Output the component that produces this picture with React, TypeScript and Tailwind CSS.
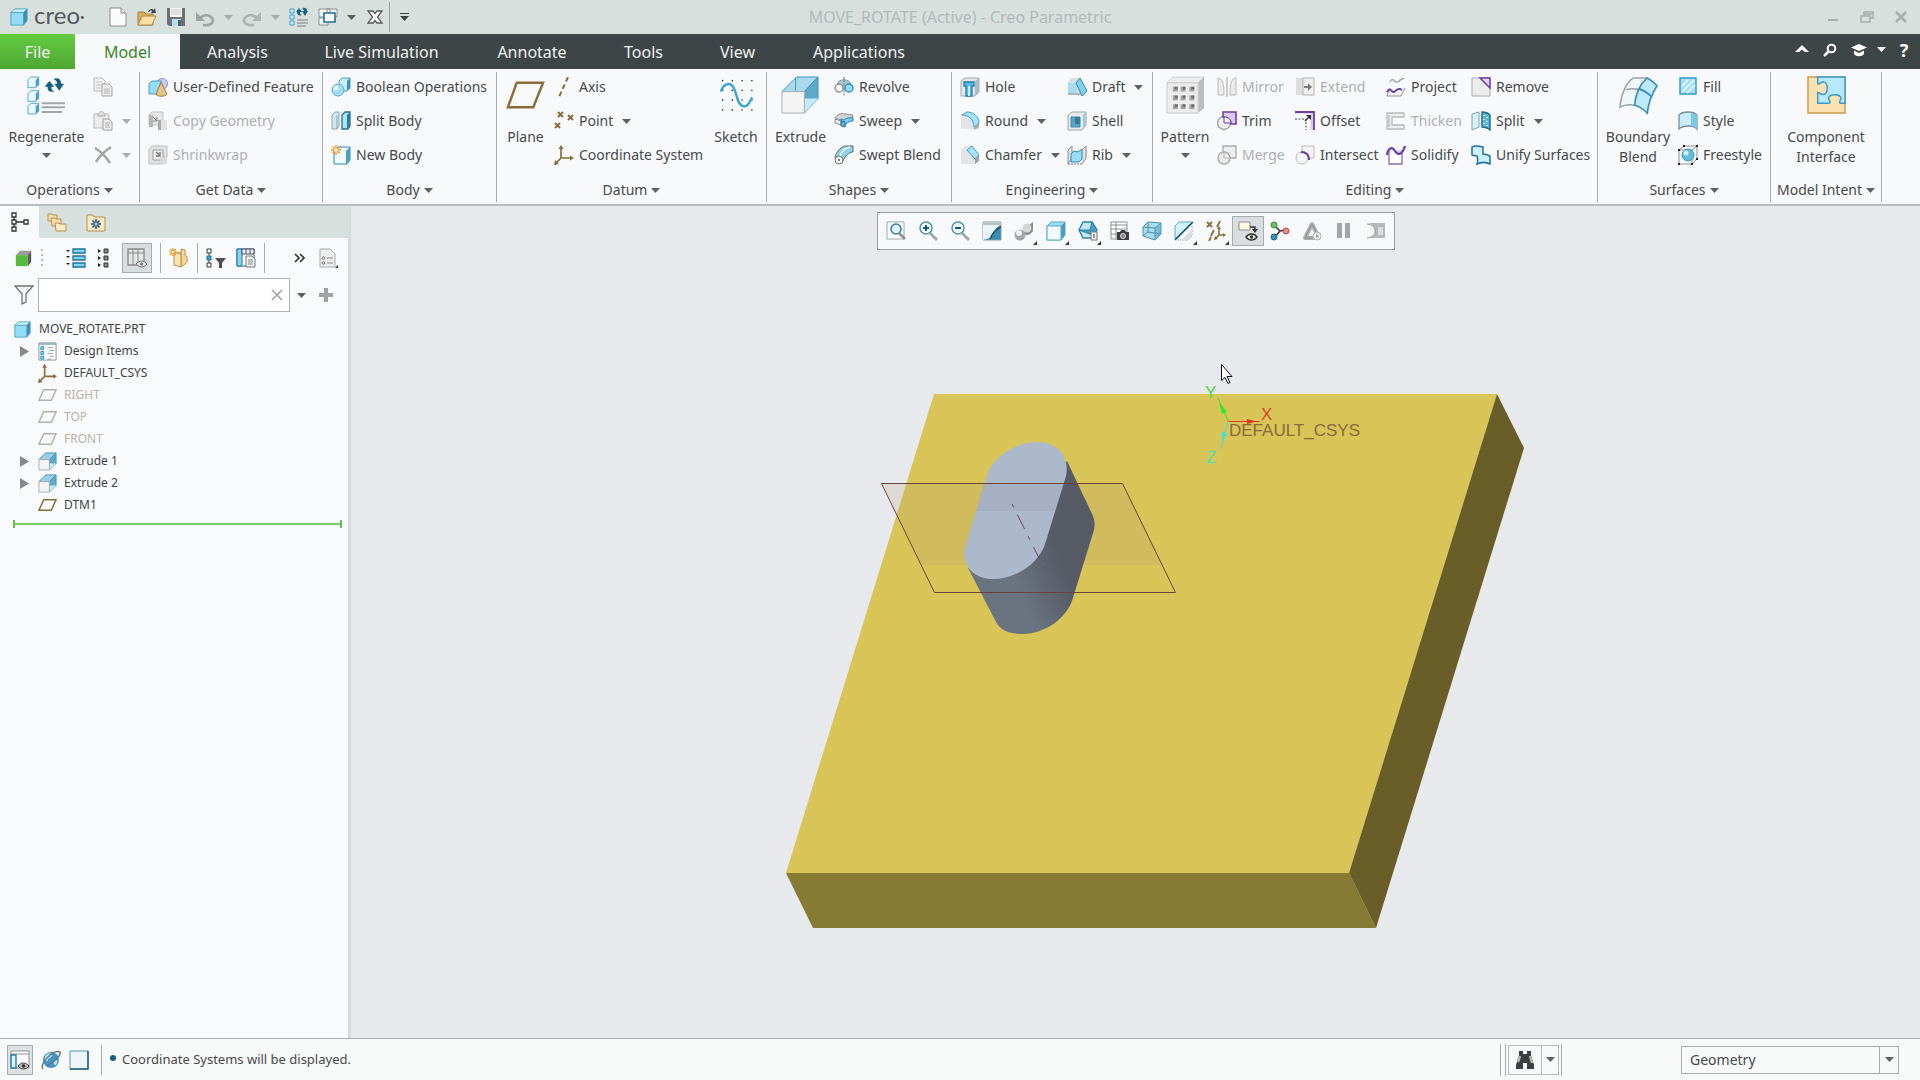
import { useId, useState } from "react";
import type { ReactNode } from "react";
import clsx from "clsx";

const BROWN = "#8a6d3b";
const PURPLE = "#6b3fa0";

// Small drawings live on a 20x20 grid, big ones (names ending in "Big") on 40x40.
const ICONS: Record<string, ReactNode> = {
  cube: (
    <>
      <path d="M1 5 5 1h14l-4 4z" fill="#c9f1ff" />
      <path d="M15 5l4-4v13l-4 5z" fill="#3f8fb5" />
      <path d="M1 5h14v14H1z" fill="#93dcf8" />
      <path d="M1 5 5 1h14v13l-4 5H1zM1 5h14v14M15 5l4-4" fill="none" stroke="#4a9cc0" />
    </>
  ),
  greenCube: (
    <>
      <path d="M1 6 6 1h13l-4 5z" fill="#9b9b9b" />
      <path d="M15 6l4-5v13l-4 5z" fill="#5c5c5c" />
      <path d="M1 6h14v13H1z" fill="#55bb3c" />
    </>
  ),
  newFile: (
    <>
      <path d="M2 1h11l5 5v13H2z" fill="#fbfbfb" stroke="#8b8f90" />
      <path d="M13 1v5h5" fill="#e4e6e6" stroke="#8b8f90" />
    </>
  ),
  open: (
    <>
      <path d="M1 5h6l2 2h7v11H1z" fill="#d9ad5e" stroke="#a9843f" />
      <path d="M1 18 5 9h14l-4 9z" fill="#f9dfa5" stroke="#b08a43" />
      <path d="M11 5c1-3 4-4 6-2l1-2 1 5h-5l1-2c-1-1-2 0-3 1z" fill="#444" />
    </>
  ),
  save: (
    <>
      <path d="M1 1h18v18H3l-2-2z" fill="#6d7173" />
      <path d="M4 1h12v9H4z" fill="#f6f6f6" />
      <path d="M5 3h10M5 5h10M5 7h10" stroke="#c5c8c8" />
      <path d="M6 12h9v7H6z" fill="#b4dff3" />
      <path d="M12 13h3v6h-3z" fill="#5d6163" />
    </>
  ),
  undo: (
    <>
      <path d="M8 18c10 1 12-5 8-8-3-3-8-2-11 1" fill="none" stroke="#9fa4a4" strokeWidth="2.6" />
      <path d="M1 5v9h9z" fill="#9fa4a4" />
    </>
  ),
  redo: (
    <>
      <path d="M12 18c-10 1-12-5-8-8 3-3 8-2 11 1" fill="none" stroke="#adb2b2" strokeWidth="2.6" />
      <path d="M19 5v9h-9z" fill="#adb2b2" />
    </>
  ),
  regenerate: (
    <>
      <path d="M1 2h4v4H1zM1 8h4v4H1zM1 14h4v4H1z" fill="#d7f2fd" stroke="#3a9ac4" />
      <path d="M8 13h11M8 16h11M8 19h9" stroke="#9a9e9f" strokeWidth="1.4" />
      <path d="M7 5l3-4 3 4h-2c0 2 1 3 2 3-3 1-5 0-5-3zM19 4l-3 5-3-5h2c0-1-1-2-2-3 3-1 5 0 5 3z" fill="#17607f" />
    </>
  ),
  windows: (
    <>
      <path d="M1 2h11v8H1zM9 2h10v8H9zM1 11h9v7H1z" fill="#f2f4f4" stroke="#8d9192" />
      <path d="M6 6h11v9H6z" fill="#fff" stroke="#1d7199" strokeWidth="1.6" />
    </>
  ),
  closeWin: (
    <path d="M3 4h5l2 2.500L12 4h5l-4.500 6 4.500 6h-5l-2-2.500L8 16H3l4.500-6z" fill="#fff" stroke="#555a5b" strokeWidth="1.300" />
  ),
  copy: (
    <>
      <path d="M1 1h8l3 3v10H1z" fill="#f0f0f0" stroke="#b9b9b9" />
      <path d="M3 5h6M3 8h6M3 11h6" stroke="#c5c5c5" />
      <path d="M9 7h7l3 3v9H9z" fill="#ececec" stroke="#a5a5a5" />
      <path d="M11 12h6M11 14h6M11 16h6" stroke="#b5b5b5" />
    </>
  ),
  paste: (
    <>
      <path d="M1 3h15v14H1z" fill="#ebebeb" stroke="#bcbcbc" />
      <path d="M5 3c1 0 2-3 3.500-3S11 3 12 3v2H5z" fill="#dcdcdc" stroke="#b0b0b0" />
      <path d="M10 8h6l3 3v8h-9z" fill="#f1f1f1" stroke="#9e9e9e" />
      <path d="M12 12h5M12 14h5M12 16h5" stroke="#a9a9a9" />
    </>
  ),
  del: <path d="M2 3c5 3 11 9 15 15M18 2C12 6 6 12 3 17" fill="none" stroke="#a3a5a6" strokeWidth="2.6" />,
  udf: (
    <>
      <circle cx="14" cy="7" r="5.500" fill="#c9cdf5" stroke="#8c92cc" />
      <path d="M1 7l3-3h9v10l-2 3H1z" fill="#93dcf8" stroke="#4a9cc0" />
      <path d="M13 5 8 17c1 3 9 3 11 0z" fill="#e3c486" stroke="#9d7b3c" />
    </>
  ),
  copyGeom: (
    <>
      <path d="M1 4l3-3h11v13H1z" fill="#e6e6e6" stroke="#c1c1c1" />
      <path d="M1 4h4v12H1z" fill="#b5b5b5" />
      <path d="M10 9h9v10h-9z" fill="#e2e2e2" />
      <path d="M10 9h3v10h-3z" fill="#a9a9a9" />
      <path d="M5 6l4 4M9 6v4H5" stroke="#858585" fill="none" />
    </>
  ),
  shrinkwrap: (
    <>
      <path d="M1 4l3-3h15v11h-4v7H1z" fill="#e2e2e2" stroke="#bcbcbc" />
      <path d="M5 5h10v10H5z" fill="#ededed" stroke="#9c9c9c" />
      <path d="M8 7l4 4M12 7v4H8" stroke="#7d7d7d" fill="none" strokeWidth="1.400" />
      <path d="M12 12h7v7h-7z" fill="#d9d9d9" />
    </>
  ),
  boolean: (
    <>
      <path d="M8 4l3-3h8v10l-3 3H8z" fill="#c9effc" stroke="#4a9cc0" />
      <path d="M16 4l3-3v10l-3 3z" fill="#3d90b6" />
      <circle cx="7" cy="13" r="6" fill="#a4dcf2" stroke="#5ea5c4" />
      <circle cx="5" cy="11" r="2.500" fill="#dff5fd" />
    </>
  ),
  splitBody: (
    <>
      <path d="M1 4l3-3h4v14l-2 3H1z" fill="#d3e6ee" stroke="#8fa8b2" />
      <path d="M6 4v14" stroke="#8fa8b2" />
      <path d="M11 4l3-3h5v14l-2 3h-6z" fill="#aee5fa" stroke="#1f7299" strokeWidth="1.300" />
      <path d="M16 4l3-3v14l-3 3z" fill="#2c7ba0" />
    </>
  ),
  newBody: (
    <>
      <path d="M3 6l4-4h12v13l-3 4H3z" fill="#eefaff" stroke="#2e86ad" />
      <path d="M15 6l4-4v13l-4 4z" fill="#4b9fc2" />
      <path d="M5 0v10M0 5h10M1.500 1.500l7 7M8.500 1.500l-7 7" stroke="#f0961e" strokeWidth="1.300" />
      <circle cx="5" cy="5" r="1.800" fill="#fff" />
    </>
  ),
  axis: <path d="M14 0 5 20" fill="none" stroke={BROWN} strokeWidth="2" strokeDasharray="5 3" />,
  point: (
    <path d="M4 1l5 5M9 1 4 6M14 4l5 5M19 4l-5 5M1 12l5 5M6 12l-5 5" fill="none" stroke={BROWN} strokeWidth="2" />
  ),
  csys: (
    <>
      <path d="M7 2v11h11M7 13l-6 6" fill="none" stroke={BROWN} strokeWidth="1.700" />
      <path d="M7 0 4.500 4h5zM20 13l-4-2.500v5zM0 20l1-5 4 4z" fill={BROWN} />
    </>
  ),
  revolve: (
    <>
      <path d="M4 5c4-3 8-3 12 0v4H4z" fill="#aac6d2" stroke="#7ba0b0" />
      <circle cx="5" cy="11" r="4" fill="#f4f4f4" stroke="#8d9192" strokeWidth="1.300" />
      <circle cx="15" cy="11" r="4" fill="#8fdcfa" stroke="#2b8bb5" strokeWidth="1.300" />
      <path d="M10 0v20" stroke="#777" strokeDasharray="5 1.500 2 1.500" />
    </>
  ),
  sweep: (
    <>
      <path d="M1 7c2-4 6-5 10-4l8 1-1 5c-3-1-5 0-6 2z" fill="#d0d5d7" stroke="#8b9093" />
      <path d="M10 9c2-2 6-3 9-2v3c-4 0-7 2-8 5l-4-1V8z" fill="#7cc7e4" stroke="#2f87ad" />
      <path d="M1 8l6 2v4l-6-2z" fill="#eee" stroke="#8b9093" />
      <path d="M7 10l4 1v5l-4-1z" fill="#5cb4d8" stroke="#1f7299" />
    </>
  ),
  sweptBlend: (
    <>
      <path d="M1 13C2 6 8 1 12 1h7v6c-4 0-8 4-10 9z" fill="#8fd3ee" stroke="#55696f" />
      <path d="M6 11c2-5 5-8 10-9" stroke="#fff" strokeWidth="1.500" fill="none" />
      <circle cx="5" cy="15" r="4" fill="#f4f4f4" stroke="#6e7476" />
      <circle cx="5" cy="15" r="1" fill="#555" />
    </>
  ),
  hole: (
    <>
      <path d="M1 4l4-3h14v14l-4 4H1z" fill="#e4e7e8" stroke="#a4a8aa" />
      <path d="M15 4l4-3v14l-4 4z" fill="#a9bcc4" />
      <path d="M4 5h10v4h-2v10H6V9H4z" fill="#5ab9df" stroke="#1f7fa8" strokeWidth="1.300" />
      <path d="M8 9h2v10H8z" fill="#c9effc" />
    </>
  ),
  round: (
    <>
      <path d="M1 5l5-4 13 7v11l-5-1H1z" fill="#e2e5e6" />
      <path d="M2 4 7 1c7 0 12 5 12 11l-5 4C14 9 9 4 2 4z" fill="#a5e3fa" stroke="#4a9cc0" />
      <path d="M14 16v3l5-3v-4z" fill="#a9adae" />
    </>
  ),
  chamfer: (
    <>
      <path d="M1 4l4-3h6l8 9v6l-4 3H1z" fill="#e2e5e6" />
      <path d="M7 5l5-4 7 9-4 4z" fill="#a5e3fa" stroke="#4a9cc0" />
      <path d="M15 14v5l4-3v-6z" fill="#9ea3a5" />
    </>
  ),
  draft: (
    <>
      <path d="M1 5l3-4h8v5l4 12H1z" fill="#d7dfe2" />
      <path d="M1 6h9v11H1z" fill="#a9dcef" />
      <path d="M9 6l4-5 7 13-5 5z" fill="#7ed1f2" stroke="#2f87ad" />
      <path d="M1 17h14" stroke="#8b9093" />
    </>
  ),
  shell: (
    <>
      <path d="M1 4l4-3h14v13l-4 5H1z" fill="#e8eaeb" stroke="#9fa4a6" />
      <path d="M16 4l3-3v13l-3 4z" fill="#a4c9d8" />
      <path d="M4 6h9v10H4z" fill="#57a5c6" stroke="#3a88aa" />
      <path d="M8 6h5v7H8z" fill="#337b9c" />
    </>
  ),
  rib: (
    <>
      <path d="M1 5l4-4v12l-4 6zM15 5l4-4v12l-4 6" fill="#dfe3e5" stroke="#8b9093" />
      <path d="M4 9l3-3 4 1 4-3v10l-3 3H4z" fill="#9addf6" stroke="#2f87ad" />
      <path d="M1 19h14" stroke="#777" strokeDasharray="2 1" />
    </>
  ),
  mirror: (
    <>
      <path d="M1 1c4 0 6 5 6 17H1z" fill="#ebebeb" stroke="#b9b9b9" />
      <path d="M19 1c-4 0-6 5-6 17h6z" fill="#ebebeb" stroke="#b9b9b9" />
      <path d="M10 0v20" stroke="#b0b0b0" strokeWidth="1.300" />
    </>
  ),
  trim: (
    <>
      <circle cx="7" cy="12" r="6.500" fill="#eee" stroke="#a5a7a8" strokeWidth="1.400" />
      <path d="M6 1h13v12h-5c0-4-3-7-8-7z" fill="#d9c9f3" stroke={PURPLE} strokeWidth="1.600" />
      <path d="M7 12V6c4 0 7 2 7 6z" fill="#f4effb" stroke={PURPLE} />
    </>
  ),
  merge: (
    <>
      <path d="M6 1h13v12H6z" fill="#ededed" stroke="#a9a9a9" strokeWidth="1.300" />
      <circle cx="7" cy="13" r="6" fill="#ececec" stroke="#a9a9a9" strokeWidth="1.400" />
      <path d="M7 7v6h6" fill="none" stroke="#b5b5b5" />
    </>
  ),
  extend: (
    <>
      <path d="M1 1h8v17H1z" fill="#dedede" />
      <path d="M8 1h11v17H8z" fill="#f0f0f0" stroke="#b0b0b0" />
      <path d="M9 9h4V6l4 4-4 4v-3H9z" fill="#7d7d7d" />
    </>
  ),
  offset: (
    <>
      <path d="M0 1h17v18" fill="none" stroke="#d9c9f3" strokeWidth="3" />
      <path d="M0 1h19v18" fill="none" stroke={PURPLE} strokeWidth="1.800" />
      <path d="M0 8h11v11" fill="none" stroke="#444" strokeDasharray="2 1.500" />
      <path d="M10 10l5-5" stroke="#333" strokeWidth="1.500" />
      <path d="M16 4v5l-5-5z" fill="#333" />
    </>
  ),
  intersect: (
    <>
      <path d="M7 1h12v12H7z" fill="#f3f3f3" stroke="#bbb" />
      <circle cx="7" cy="13" r="6" fill="#f7f7f7" stroke="#bbb" />
      <path d="M6 7c5 0 8 3 8 8" fill="none" stroke={PURPLE} strokeWidth="2" />
    </>
  ),
  project: (
    <>
      <path d="M4 5c3-6 4 1 7 0 3 0 4-5 7-3" fill="none" stroke="#a9acae" strokeWidth="1.600" />
      <path d="M4 11 1 19h14l4-8" fill="none" stroke="#8d9192" />
      <path d="M1 15c3-6 5 1 7 0s4-5 8-2" fill="none" stroke={PURPLE} strokeWidth="2" />
    </>
  ),
  thicken: (
    <path d="M1 2h17v4H6v8h12v4H1zM3 4v12" fill="#ededed" stroke="#b9b9b9" strokeWidth="1.300" />
  ),
  solidify: (
    <>
      <path d="M3 6v13h13V5" fill="#fff" stroke="#8a6bb5" strokeWidth="1.300" />
      <path d="M4 6c4-3 5 4 8 3s4-4 4-4" fill="#d9c9f3" />
      <path d="M1 10c1-7 5-9 8-4s7 4 10-5" fill="none" stroke={PURPLE} strokeWidth="2.200" />
    </>
  ),
  remove: (
    <>
      <path d="M1 1h18v18H1z" fill="#ececec" stroke="#aaa" />
      <path d="M9 1h10v10z" fill="#e0d4f5" stroke={PURPLE} strokeWidth="1.500" />
    </>
  ),
  split: (
    <>
      <path d="M1 3l7-2v15l-7 3z" fill="#d3f2fc" stroke="#8b9da5" />
      <path d="M11 1c4 0 6 1 8 3v15c-2-2-4-3-8-3z" fill="#5bb6dc" stroke="#1c6c92" strokeWidth="1.400" />
      <path d="M13 4v1M16 6v1M13 8v1M16 10v1M13 12v1M16 14v1" stroke="#fff" strokeWidth="1.500" />
    </>
  ),
  unify: (
    <path d="M1 2c3-2 7-1 11 0v7c3 0 5 1 7 2v8c-4-2-9-2-13 0 1-3 1-5 0-8-2-1-4 0-5-1z" fill="#cdeffb" stroke="#1f7299" strokeWidth="1.500" />
  ),
  fill: (
    <>
      <path d="M2 1h16v16H2z" fill="#a3e0f8" stroke="#3a9ac4" strokeWidth="1.500" />
      <path d="M4 9l6-6M4 15 16 3M9 16l8-8" stroke="#e9f9ff" strokeWidth="1.500" />
    </>
  ),
  style: (
    <>
      <path d="M1 4c4-4 14-4 18 0v14c-3-4-14-4-18 0z" fill="#c9eefb" stroke="#7d8c93" strokeWidth="1.300" />
      <path d="M13 2c3 0 4 1 6 2v14c-2-2-4-3-6-3z" fill="#7cc7e4" />
    </>
  ),
  freestyle: (
    <>
      <path d="M1 5l5-4h13v13l-5 5H1zM1 5h13v14M14 5l5-4" fill="none" stroke="#8d9192" />
      <circle cx="10" cy="10" r="6" fill="#63bde2" stroke="#3f95b9" />
      <circle cx="8" cy="8" r="2.500" fill="#d7f2fd" />
      <path d="M0 4h2v2H0zM5 0h2v2H5zM18 0h2v2h-2zM0 18h2v2H0zM13 18h2v2h-2zM18 13h2v2h-2z" fill="#222" />
    </>
  ),
  regenerateBig: (
    <>
      {[1, 15, 28].map((y) => (
        <g key={y}>
          <path d={`M1 ${y + 3}l3-3h8v8l-3 3H1z`} fill="#e8f8fe" stroke="#57a9cb" />
          <path d={`M9 ${y + 3}l3-3v8l-3 3z`} fill="#4a9cc0" />
        </g>
      ))}
      <path d="M15 28h24M15 32h24M15 37h21" stroke="#a2a6a8" strokeWidth="2" />
      <path d="M18 11l5-6 5 6h-3c0 3 1 4 3 5-5 1-7-1-7-5zM38 8l-5 7-5-7h3c0-3-2-4-4-5 5-2 8 0 8 5z" fill="#17607f" />
    </>
  ),
  planeBig: <path d="M11 7h27L28 32H2z" fill="none" stroke={BROWN} strokeWidth="2.500" />,
  sketchBig: (
    <>
      {[4, 14, 24, 34].map((y) =>
        [5, 15, 25, 35].map((x) => <path key={`${x}-${y}`} d={`M${x} ${y}h1.500v1.500h-1.500z`} fill="#333" />)
      )}
      <path d="M4 16c3-9 11-11 14-2 3 7 3 16 9 17 4 1 6-3 9-9" fill="none" stroke="#3ba5d8" strokeWidth="2.500" />
    </>
  ),
  extrudeBig: (
    <>
      <path d="M1 16 16 1h22L24 16z" fill="#a9d9ec" stroke="#3f94b8" />
      <path d="M24 16 38 1v22L24 38z" fill="#5ea9c8" stroke="#3f94b8" />
      <path d="M24 38l14-15H24z" fill="#c3ecfb" />
      <path d="M15 2v13" stroke="#3f94b8" />
      <path d="M1 16h23v22H1z" fill="#f4f4f4" stroke="#a9adaf" />
    </>
  ),
  patternBig: (
    <>
      <path d="M1 7l6-6h32l-6 6z" fill="#ececec" stroke="#d0d0d0" />
      <path d="M33 7l6-6v32l-6 5z" fill="#bdbdbd" />
      <path d="M1 7h32v31H1z" fill="#ececec" stroke="#c9c9c9" />
      {[11, 20, 29].map((y) =>
        [7, 15, 24].map((x) => (
          <g key={`${x}-${y}`}>
            <path d={`M${x} ${y}h5v5h-5z`} fill="#a5a5a5" />
            <path d={`M${x + 2} ${y}h3v3h-3z`} fill="#6f6f6f" />
          </g>
        ))
      )}
    </>
  ),
  boundaryBig: (
    <>
      <path d="M15 1C8 6 2 18 1 32c5-3 10-3 15-2l4-16 9-13z" fill="#f1f6f8" />
      <path d="M29 2c4 2 7 5 10 8-5 8-9 18-10 28-4-4-8-7-13-8C17 18 22 8 29 2z" fill="#bfe9f8" />
      <path d="M29 2H15C8 6 2 18 1 32c5-3 10-3 15-2M7 14c8-2 17-1 25 6" fill="none" stroke="#9aa1a4" strokeWidth="1.500" />
      <path d="M29 2c4 2 7 5 10 8-5 8-9 18-10 28-4-4-8-7-13-8C17 18 22 8 29 2zM20 13c5 1 9 4 13 8" fill="none" stroke="#3a8fb5" strokeWidth="1.700" />
    </>
  ),
  componentBig: (
    <>
      <path d="M1 1h38v37H1z" fill="#fbe2b3" stroke="#c99b4b" strokeWidth="1.500" />
      <path d="M11 1h28v27h-4c-3 0-1-3 0-5-1-5-12-5-13 0 1 2 3 5 0 5H11V17c2 0 3 2 6 2 5-1 5-12 0-13-3 0-4 3-6 2z" fill="#b5e9fb" stroke="#3a9ac4" strokeWidth="1.500" />
    </>
  ),
  modelTree: (
    <>
      <path d="M4 5v10M6 10h8" stroke="#333" strokeWidth="1.300" />
      <path d="M2 1h4v4H2zM2 8h4v4H2zM2 15h4v4H2zM14 8h4v4h-4z" fill="#fff" stroke="#333" strokeWidth="1.300" />
    </>
  ),
  layers: (
    <>
      <path d="M1 2h4l1 1h4v6H1z" fill="#f8dfae" stroke="#b68f4c" />
      <path d="M4 6h4l1 1h5v7H5z" fill="#f8dfae" stroke="#b68f4c" />
      <path d="M8 11h4l1 1h6v7H9z" fill="#fbe8c2" stroke="#b68f4c" />
    </>
  ),
  favorites: (
    <>
      <path d="M1 3h6l1 2h11v14H1z" fill="#fbe8c2" stroke="#b68f4c" />
      <path d="M10 7v10M5 12h10M6.500 8.500l7 7M13.500 8.500l-7 7" stroke="#14587a" strokeWidth="1.400" />
      <circle cx="10" cy="12" r="1.500" fill="#9ddcf5" />
    </>
  ),
  expandAll: (
    <>
      <path d="M0 2h4L2 4zM0 8h4l-2 2zM0 15h4l-2 2z" fill="#222" />
      <path d="M7 1h12v4H7zM7 8h12v4H7zM7 15h12v4H7z" fill="#85d4f3" stroke="#1f7299" strokeWidth="1.300" />
    </>
  ),
  collapseAll: (
    <>
      <path d="M4 1v4l3-2zM4 8v4l3-2zM4 15v4l3-2z" fill="#222" />
      <path d="M10 1h4v4h-4zM10 8h4v4h-4zM10 15h4v4h-4z" fill="#888" stroke="#333" />
    </>
  ),
  treeColumns: (
    <>
      <path d="M1 1h16v16H1z" fill="#e5e7e7" stroke="#888" strokeWidth="1.300" />
      <path d="M1 5h16M6 1v16M11 1v16" stroke="#888" />
      <path d="M9 16c3-4 8-4 11 0-3 4-8 4-11 0z" fill="#ddd" stroke="#777" />
      <circle cx="14.500" cy="16" r="1.500" fill="#777" />
    </>
  ),
  insert: (
    <>
      <path d="M5 4h7v13H5z" fill="#e9bd6c" />
      <path d="M12 1l4 1v5c3 2 3 8 0 9l-4 3z" fill="#f7d696" stroke="#b68f4c" />
      <path d="M5 4l7 2v13l-7-2z" fill="#fbe2b3" stroke="#b68f4c" />
      <path d="M4 0v8M0 4h8M1 1l6 6M7 1 1 7" stroke="#f0961e" strokeWidth="1.200" />
      <circle cx="4" cy="4" r="1.300" fill="#fff" />
    </>
  ),
  treeFilter: (
    <>
      <path d="M3 4v12" stroke="#333" />
      <path d="M1 1h4v4H1zM1 15h4v4H1z" fill="#fff" stroke="#333" />
      <path d="M1 8h4v4H1z" fill="#3aa0d0" stroke="#1f7299" />
      <path d="M9 10h11l-4 5v5h-3v-5z" fill="#4b4f51" />
    </>
  ),
  treeSettings: (
    <>
      <path d="M1 1h17v17H1z" fill="#fff" stroke="#1f7299" />
      <path d="M1 1h5v17H1z" fill="#85d4f3" stroke="#1f7299" />
      <path d="M6 1h12v5H6zM10 1v5M14 1v5" fill="#eef" stroke="#4b4f51" />
      <path d="M10 8h6l3 3v8h-9z" fill="#f4f4f4" stroke="#777" />
      <path d="M12 12h5M12 14h5M12 16h5" stroke="#888" />
    </>
  ),
  page: (
    <>
      <path d="M2 1h10l5 5v13H2z" fill="#ececec" stroke="#a7abac" />
      <circle cx="5.500" cy="10" r="1.300" fill="none" stroke="#777" />
      <circle cx="5.500" cy="15" r="1.300" fill="none" stroke="#777" />
      <path d="M9 10h6M9 15h6" stroke="#888" />
      <path d="M20 17v3h-3z" fill="#333" />
    </>
  ),
  funnel: <path d="M1 1h18l-7 8v8l-4 2V9z" fill="#f1f2f2" stroke="#6e7375" strokeWidth="1.300" />,
  designItems: (
    <>
      <path d="M1 1h18v18H1z" fill="#fff" stroke="#8b9093" />
      <path d="M1 1h18v2H1z" fill="#8db4c5" />
      <path d="M3 5h3v3H3zM3 10h3v3H3zM3 15h3v3H3z" fill="#9fdcf5" stroke="#1f8cc0" />
      <path d="M10 6h6M12 9h5M10 12h6M12 15h5M10 18h4" stroke="#999" />
    </>
  ),
  plane: <path d="M6 4h13l-5 11H1z" fill="none" stroke={BROWN} strokeWidth="1.600" />,
  planeOff: <path d="M6 4h13l-5 11H1z" fill="none" stroke="#b3b1a9" strokeWidth="1.500" />,
  extrude: (
    <>
      <path d="M1 8l7-7h11l-7 7z" fill="#9dcfe3" stroke="#3f94b8" />
      <path d="M12 8l7-7v11l-7 7z" fill="#5ea9c8" stroke="#3f94b8" />
      <path d="M12 19l7-7h-7z" fill="#c3ecfb" />
      <path d="M1 8h11v11H1z" fill="#f4f4f4" stroke="#a9adaf" />
    </>
  ),
  zoomFit: (
    <>
      <path d="M1 1h17v17H1z" fill="#fff" stroke="#a2a7a9" />
      <circle cx="10" cy="8" r="5" fill="#e3f5fc" stroke="#2d7ea5" strokeWidth="1.500" />
      <path d="M13 12l6 6" stroke="#8d9192" strokeWidth="2.500" />
    </>
  ),
  zoomIn: (
    <>
      <circle cx="8" cy="7" r="6" fill="#eefaff" stroke="#5d8fa5" strokeWidth="1.500" />
      <path d="M5 7h6M8 4v6" stroke="#14587a" strokeWidth="2" />
      <path d="M12 12l7 7" stroke="#a4a8aa" strokeWidth="3" />
    </>
  ),
  zoomOut: (
    <>
      <circle cx="8" cy="7" r="6" fill="#eefaff" stroke="#5d8fa5" strokeWidth="1.500" />
      <path d="M5 7h6" stroke="#14587a" strokeWidth="2" />
      <path d="M12 12l7 7" stroke="#a4a8aa" strokeWidth="3" />
    </>
  ),
  repaint: (
    <>
      <path d="M1 1h18v18H1z" fill="#3a8cae" stroke="#8b9ba2" />
      <path d="M1 4h18C13 6 12 12 8 17l-7 2z" fill="#eaf5f9" />
      <path d="M19 6C14 8 10 13 8 18" stroke="#14587a" strokeWidth="1.500" fill="none" />
      <path d="M1 1h18v3H1z" fill="#b9c4c8" />
    </>
  ),
  shading: (
    <>
      <path d="M10 5c4 1 6-2 9-4v9c-3 4-6 5-9 3z" fill="#8b8b8b" />
      <circle cx="13" cy="7" r="4.500" fill="#d5d5d5" />
      <circle cx="6" cy="14" r="5.500" fill="#a5a5a5" />
      <circle cx="5" cy="12" r="3" fill="#efefef" />
    </>
  ),
  displayStyle: (
    <>
      <path d="M1 5l4-4h14v13l-4 5H1z" fill="#9edcf4" stroke="#5aa9c9" />
      <path d="M15 5l4-4v13l-4 5z" fill="#4a9cc0" />
      <path d="M1 5h14v14H1z" fill="#f2fbfe" stroke="#5aa9c9" />
    </>
  ),
  savedViews: (
    <>
      <path d="M5 1h9l5 8-5 8H5l-4-8z" fill="#bfe9f8" stroke="#2d7ea5" strokeWidth="1.300" />
      <path d="M1 9h11l2-8 5 8-2 4h-5z" fill="#4a9cc0" stroke="#2d7ea5" />
      <path d="M13 11h6v8h-6z" fill="#f4f4f4" stroke="#777" />
      <path d="M15 14h2M15 16h2" stroke="#444" />
    </>
  ),
  viewManager: (
    <>
      <path d="M1 1h16v17H1zM1 4h16M6 1v17M1 8h16M1 13h10" fill="#fff" stroke="#8d9192" />
      <path d="M7 11h3l1-2h4l1 2h3v8H7z" fill="#3c3f41" />
      <circle cx="13" cy="15" r="2.500" fill="#888" stroke="#ddd" />
    </>
  ),
  perspective: (
    <>
      <path d="M1 6 6 1l13 1v11l-6 6-12-4z" fill="#a9dcef" stroke="#4b8fab" />
      <path d="M1 6l12 1v12M13 7l6-5M6 1v10l13 2M6 11l-5 4" fill="none" stroke="#4b8fab" />
      <path d="M13 7l6-5v11l-6 6z" fill="#5fa9c6" opacity="0.7" />
    </>
  ),
  section: (
    <>
      <path d="M1 5l4-4h13L1 18z" fill="#d3f2fc" stroke="#5aa9c9" />
      <path d="M18 5v10l-4 4H3" fill="none" stroke="#777" strokeDasharray="1 1.500" />
      <path d="M8 19 18 8v7l-4 4z" fill="#ddd" />
      <path d="M1 19 19 1" stroke="#14587a" strokeWidth="1.600" />
    </>
  ),
  datumDisplay: (
    <>
      <path d="M1 1l5 5M6 1 1 6M14 0l-3 6M8 9l-3 6M5 16l-2 4" stroke={BROWN} strokeWidth="1.800" />
      <path d="M13 7v7h6M13 14l-4 4" fill="none" stroke={BROWN} strokeWidth="1.600" />
      <path d="M13 5l-2 3h4zM20 14l-3-2v4zM8 19l1-4 3 3z" fill={BROWN} />
    </>
  ),
  annotDisplay: (
    <>
      <path d="M1 1h11v8H1z" fill="#fff8e2" stroke="#8b9093" />
      <path d="M12 6h5v3" fill="none" stroke="#333" strokeWidth="1.400" />
      <path d="M14 8h6l-3 4z" fill="#333" />
      <path d="M8 16c3-4 8-4 11 0-3 4-8 4-11 0z" fill="#fff" stroke="#333" strokeWidth="1.400" />
      <circle cx="13.500" cy="16" r="1.800" fill="#333" />
    </>
  ),
  spinCenter: (
    <>
      <path d="M4 4l6 6 6-1M10 10l-5 6" stroke="#333" strokeWidth="1.500" fill="none" />
      <circle cx="4" cy="4" r="3" fill="#6fbf5f" stroke="#3f8a35" />
      <circle cx="16" cy="10" r="3" fill="#ee8a86" stroke="#b94a46" />
      <circle cx="4" cy="16" r="3" fill="#3d8fba" stroke="#1c6488" />
    </>
  ),
  simulate: (
    <>
      <path d="M10 3 3 17h14z" fill="none" stroke="#b0b0b0" strokeWidth="4" strokeLinejoin="round" />
      <path d="M10 3 3 17h14z" fill="none" stroke="#8e8e8e" strokeLinejoin="round" />
      <circle cx="15" cy="15" r="4" fill="#eee" stroke="#b5b5b5" />
      <path d="M14 13v4l3-2z" fill="#999" />
    </>
  ),
  pause: <path d="M3 2h5v15H3zM11 2h5v15h-5z" fill="#a3a5a6" />,
  stopSim: (
    <>
      <path d="M1 2h18v15H1c6-1 8-3 8-7S7 3 1 2z" fill="#b5b8b9" />
      <path d="M1 3c6 1 8 3 8 7s-2 6-8 7" fill="none" stroke="#989b9c" />
      <path d="M12 6h5v8h-5z" fill="#dadcdd" />
    </>
  ),
  navToggle: (
    <>
      <path d="M1 1h18v17H1z" fill="#fff" stroke="#8b9093" />
      <path d="M1 4h18" stroke="#8b9093" />
      <path d="M1 5h5v13H1z" fill="#d3f2fc" stroke="#2d7ea5" strokeWidth="1.400" />
      <path d="M8 16c3-4 8-4 11 0-3 4-8 4-11 0z" fill="#bbb" stroke="#444" />
      <circle cx="13.500" cy="16" r="1.800" fill="#333" />
    </>
  ),
  globe: (
    <>
      <circle cx="10" cy="10" r="8" fill="#3f98cc" />
      <path d="M6 4c3-2 6 0 5 2s-4 2-4 4-2 1-3 0 0-4 2-6zM14 10c2-1 3 1 2 3s-2 3-3 1 0-3 1-4z" fill="#bfe6f6" />
      <path d="M2 19C-2 14 12-1 19 2c1 4-6 10-13 14" fill="none" stroke="#6e7578" strokeWidth="1.500" />
    </>
  ),
  blankBox: (
    <>
      <path d="M1 1h18v18H1z" fill="#eef4f7" stroke="#4f98b8" />
      <path d="M19 1v18H1" fill="none" stroke="#1f5e7c" strokeWidth="1.500" />
    </>
  ),
  find: (
    <>
      <path d="M4 1h4v3h4V1h4v4l3 10v4h-7v-6H8v6H1v-4L4 5z" fill="#3c3f41" />
      <path d="M3 12l2-6M15 6l2 7" stroke="#b5b8b9" strokeWidth="2.500" />
    </>
  ),
};

function Icon({ name, className = "h-5 w-5" }: { name: string; className?: string }) {
  const grid = name.endsWith("Big") ? 40 : 20;
  return (
    <svg className={clsx("shrink-0", className)} viewBox={`0 0 ${grid} ${grid}`} aria-hidden="true">
      {ICONS[name]}
    </svg>
  );
}

function Caret({ className = "text-[#5d6163]" }: { className?: string }) {
  return (
    <svg className={clsx("h-[5px] w-[9px] shrink-0", className)} viewBox="0 0 9 5" aria-hidden="true">
      <path d="M0 0h9L4.500 5z" fill="currentColor" />
    </svg>
  );
}

type Item = { icon: string; label?: string; title?: string; arrow?: boolean; off?: boolean };
type Column =
  | { kind: "big"; width: string; icon: string; lines: string[]; arrow?: boolean }
  | { kind: "list"; width: string; items: Item[] };
type Group = { name: string; width: string; columns: Column[] };

const GROUPS: Group[] = [
  {
    name: "Operations",
    width: "w-[140px]",
    columns: [
      { kind: "big", width: "w-[93px]", icon: "regenerateBig", lines: ["Regenerate"], arrow: true },
      {
        kind: "list",
        width: "flex-1",
        items: [
          { icon: "copy", title: "Copy", off: true },
          { icon: "paste", title: "Paste", arrow: true, off: true },
          { icon: "del", title: "Delete", arrow: true, off: true },
        ],
      },
    ],
  },
  {
    name: "Get Data",
    width: "w-[183px]",
    columns: [
      {
        kind: "list",
        width: "ml-2 flex-1",
        items: [
          { icon: "udf", label: "User-Defined Feature" },
          { icon: "copyGeom", label: "Copy Geometry", off: true },
          { icon: "shrinkwrap", label: "Shrinkwrap", off: true },
        ],
      },
    ],
  },
  {
    name: "Body",
    width: "w-[174px]",
    columns: [
      {
        kind: "list",
        width: "ml-2 flex-1",
        items: [
          { icon: "boolean", label: "Boolean Operations" },
          { icon: "splitBody", label: "Split Body" },
          { icon: "newBody", label: "New Body" },
        ],
      },
    ],
  },
  {
    name: "Datum",
    width: "w-[270px]",
    columns: [
      { kind: "big", width: "w-[57px]", icon: "planeBig", lines: ["Plane"] },
      {
        kind: "list",
        width: "flex-1",
        items: [
          { icon: "axis", label: "Axis" },
          { icon: "point", label: "Point", arrow: true },
          { icon: "csys", label: "Coordinate System" },
        ],
      },
      { kind: "big", width: "w-[60px]", icon: "sketchBig", lines: ["Sketch"] },
    ],
  },
  {
    name: "Shapes",
    width: "w-[185px]",
    columns: [
      { kind: "big", width: "w-[67px]", icon: "extrudeBig", lines: ["Extrude"] },
      {
        kind: "list",
        width: "flex-1",
        items: [
          { icon: "revolve", label: "Revolve" },
          { icon: "sweep", label: "Sweep", arrow: true },
          { icon: "sweptBlend", label: "Swept Blend" },
        ],
      },
    ],
  },
  {
    name: "Engineering",
    width: "w-[201px]",
    columns: [
      {
        kind: "list",
        width: "ml-2 w-[107px]",
        items: [
          { icon: "hole", label: "Hole" },
          { icon: "round", label: "Round", arrow: true },
          { icon: "chamfer", label: "Chamfer", arrow: true },
        ],
      },
      {
        kind: "list",
        width: "flex-1",
        items: [
          { icon: "draft", label: "Draft", arrow: true },
          { icon: "shell", label: "Shell" },
          { icon: "rib", label: "Rib", arrow: true },
        ],
      },
    ],
  },
  {
    name: "Editing",
    width: "w-[445px]",
    columns: [
      { kind: "big", width: "w-[64px]", icon: "patternBig", lines: ["Pattern"], arrow: true },
      {
        kind: "list",
        width: "w-[78px]",
        items: [
          { icon: "mirror", label: "Mirror", off: true },
          { icon: "trim", label: "Trim" },
          { icon: "merge", label: "Merge", off: true },
        ],
      },
      {
        kind: "list",
        width: "w-[91px]",
        items: [
          { icon: "extend", label: "Extend", off: true },
          { icon: "offset", label: "Offset" },
          { icon: "intersect", label: "Intersect" },
        ],
      },
      {
        kind: "list",
        width: "w-[85px]",
        items: [
          { icon: "project", label: "Project" },
          { icon: "thicken", label: "Thicken", off: true },
          { icon: "solidify", label: "Solidify" },
        ],
      },
      {
        kind: "list",
        width: "flex-1",
        items: [
          { icon: "remove", label: "Remove" },
          { icon: "split", label: "Split", arrow: true },
          { icon: "unify", label: "Unify Surfaces" },
        ],
      },
    ],
  },
  {
    name: "Surfaces",
    width: "w-[173px]",
    columns: [
      { kind: "big", width: "w-[80px]", icon: "boundaryBig", lines: ["Boundary", "Blend"] },
      {
        kind: "list",
        width: "flex-1",
        items: [
          { icon: "fill", label: "Fill" },
          { icon: "style", label: "Style" },
          { icon: "freestyle", label: "Freestyle" },
        ],
      },
    ],
  },
  {
    name: "Model Intent",
    width: "w-[111px]",
    columns: [{ kind: "big", width: "flex-1", icon: "componentBig", lines: ["Component", "Interface"] }],
  },
];

const TABS = [
  { label: "Model", width: "w-[105px]" },
  { label: "Analysis", width: "w-[115px]" },
  { label: "Live Simulation", width: "w-[173px]" },
  { label: "Annotate", width: "w-[128px]" },
  { label: "Tools", width: "w-[95px]" },
  { label: "View", width: "w-[93px]" },
  { label: "Applications", width: "w-[150px]" },
];

const VIEW_TOOLS = [
  { icon: "zoomFit", title: "Refit" },
  { icon: "zoomIn", title: "Zoom In" },
  { icon: "zoomOut", title: "Zoom Out" },
  { icon: "repaint", title: "Repaint" },
  { icon: "shading", title: "Rendering Options", more: true },
  { icon: "displayStyle", title: "Display Style", more: true },
  { icon: "savedViews", title: "Saved Orientations", more: true },
  { icon: "viewManager", title: "View Manager" },
  { icon: "perspective", title: "Perspective View" },
  { icon: "section", title: "Section Display", more: true },
  { icon: "datumDisplay", title: "Datum Display Filters", more: true },
  { icon: "annotDisplay", title: "Annotation Display", on: true },
  { icon: "spinCenter", title: "Spin Center" },
  { icon: "simulate", title: "Simulate" },
  { icon: "pause", title: "Pause" },
  { icon: "stopSim", title: "Stop" },
];

const TREE = [
  { icon: "designItems", label: "Design Items", expandable: true },
  { icon: "csys", label: "DEFAULT_CSYS" },
  { icon: "planeOff", label: "RIGHT", hidden: true },
  { icon: "planeOff", label: "TOP", hidden: true },
  { icon: "planeOff", label: "FRONT", hidden: true },
  { icon: "extrude", label: "Extrude 1", expandable: true },
  { icon: "extrude", label: "Extrude 2", expandable: true },
  { icon: "plane", label: "DTM1" },
];

function TitleBar() {
  return (
    <header className="grid h-[34px] grid-cols-[1fr_auto_1fr] items-center bg-[#d8e0de]">
      <div className="flex h-full items-center pl-2.5">
        <Icon name="cube" className="h-[18px] w-[18px]" />
        <span className="ml-1.5 w-[74px] pb-1 font-[Lato] text-2xl leading-7 text-[#55595b]">
          creo<sup className="text-[8px]">•</sup>
        </span>
        <div className="flex items-center gap-[9px]">
          <button aria-label="New"><Icon name="newFile" /></button>
          <button aria-label="Open"><Icon name="open" /></button>
          <button aria-label="Save"><Icon name="save" /></button>
          <button aria-label="Undo"><Icon name="undo" /></button>
          <button aria-label="Undo list"><Caret className="text-[#a5aaaa]" /></button>
          <button aria-label="Redo"><Icon name="redo" /></button>
          <button aria-label="Redo list"><Caret className="text-[#a5aaaa]" /></button>
          <button aria-label="Regenerate"><Icon name="regenerate" /></button>
          <button aria-label="Windows"><Icon name="windows" /></button>
          <button aria-label="Window list"><Caret /></button>
          <button aria-label="Close"><Icon name="closeWin" /></button>
        </div>
        <div className="ml-1 h-[30px] w-px bg-[#9a9f9f]" />
        <button aria-label="Customize toolbar" className="ml-2.5 flex flex-col gap-0.5">
          <span className="h-px w-[9px] bg-[#3c4143]" />
          <Caret className="text-[#3c4143]" />
        </button>
      </div>
      <h1 className="text-base text-[#b3b9b8]">MOVE_ROTATE (Active) - Creo Parametric</h1>
      <div className="flex items-center justify-end gap-5 pr-3 text-[#a7adac]">
        <button aria-label="Minimize">
          <svg className="h-[14px] w-[14px]" viewBox="0 0 14 14"><path d="M2 9h10v2H2z" fill="currentColor" /></svg>
        </button>
        <button aria-label="Restore">
          <svg className="h-[14px] w-[14px]" viewBox="0 0 14 14">
            <path d="M1 6h9v6H1zM4 6V2h9v6h-3M4 4h9" fill="none" stroke="currentColor" strokeWidth="1.500" />
          </svg>
        </button>
        <button aria-label="Close window">
          <svg className="h-[14px] w-[14px]" viewBox="0 0 14 14">
            <path d="M2 2l10 10M12 2 2 12" stroke="currentColor" strokeWidth="2.500" />
          </svg>
        </button>
      </div>
    </header>
  );
}

function TabBar() {
  const [active, setActive] = useState("Model");
  return (
    <nav className="flex h-[35px] bg-[#3e4547] text-base text-[#f0f2f2]">
      <button className="w-[75px] bg-linear-to-b from-[#62cb40] to-[#4fa834]">File</button>
      {TABS.map((tab) => (
        <button
          key={tab.label}
          onClick={() => setActive(tab.label)}
          className={clsx(tab.width, active === tab.label && "bg-[#f8f9fb] text-[#3d8527]")}>
          {tab.label}
        </button>
      ))}
      <div className="ml-auto flex items-center gap-[14px] pr-2 pb-1 text-white">
        <button aria-label="Minimize ribbon">
          <svg className="h-[14px] w-[14px]" viewBox="0 0 14 14"><path d="M0 9 7 2l7 7h-4L7 6.500 4 9z" fill="currentColor" /></svg>
        </button>
        <button aria-label="Search">
          <svg className="h-[14px] w-[14px]" viewBox="0 0 14 14">
            <circle cx="8.500" cy="5.500" r="3.800" fill="none" stroke="currentColor" strokeWidth="2" />
            <path d="M6 8l-5 5" stroke="currentColor" strokeWidth="2.500" />
          </svg>
        </button>
        <div className="flex items-center gap-2.5">
          <button aria-label="Learning">
            <svg className="h-[14px] w-4" viewBox="0 0 16 14">
              <path d="M8 1 0 4.500 8 8l8-3.500zM3 7.500V11c2 3 8 3 10 0V7.500L8 10z" fill="currentColor" />
            </svg>
          </button>
          <button aria-label="Learning list"><Caret className="text-white" /></button>
          <button aria-label="Help" className="w-4 text-lg leading-5 font-bold">?</button>
        </div>
      </div>
    </nav>
  );
}

function RibbonColumn({ column }: { column: Column }) {
  if (column.kind === "big") {
    return (
      <button className={clsx("flex flex-col items-center pt-1", column.width)}>
        <Icon name={column.icon} className="h-[39px] w-[39px]" />
        <span className="mt-3 leading-5">
          {column.lines.map((line) => <span key={line} className="block">{line}</span>)}
        </span>
        {column.arrow && <span className="mt-1.5"><Caret /></span>}
      </button>
    );
  }
  return (
    <div className={clsx("flex flex-col gap-1", column.width)}>
      {column.items.map((item) => (
        <button
          key={item.icon}
          disabled={item.off}
          aria-label={item.title}
          className="flex h-[30px] items-center gap-[5px] whitespace-nowrap disabled:text-[#adb0b2]">
          <Icon name={item.icon} />
          {item.label}
          {item.arrow && <span className="ml-1"><Caret className={item.off ? "text-[#a9acae]" : undefined} /></span>}
        </button>
      ))}
    </div>
  );
}

function Ribbon() {
  return (
    <div className="flex border-b-2 border-[#b9bdc0] bg-[#f8f9fb] pt-[3px] pb-0.5 text-sm text-[#45494b]">
      {GROUPS.map((group) => (
        <section key={group.name} className={clsx("flex h-[130px] shrink-0 flex-col border-r border-[#a9acae]", group.width)}>
          <div className="flex flex-1">
            {group.columns.map((column, i) => <RibbonColumn key={i} column={column} />)}
          </div>
          <button className="flex h-6 items-center justify-center gap-1 whitespace-nowrap">
            {group.name}
            <Caret />
          </button>
        </section>
      ))}
    </div>
  );
}

function Separator() {
  return <div className="h-[30px] w-px bg-[#a9acae]" />;
}

function Sidebar() {
  const [query, setQuery] = useState("");
  return (
    <aside className="flex w-[351px] shrink-0 flex-col border-r-3 border-[#d3dcda] bg-[#f8fafb] text-[#3f4446]">
      <div className="flex h-8 bg-[#d8e0de]">
        <button aria-label="Model Tree" className="flex w-[39px] items-center justify-center bg-[#f8fafb]"><Icon name="modelTree" /></button>
        <button aria-label="Layers" className="flex w-9 items-center justify-center"><Icon name="layers" /></button>
        <button aria-label="Favorites" className="flex w-[42px] items-center justify-center"><Icon name="favorites" /></button>
      </div>

      <div className="flex h-10 items-center gap-2 pr-2.5 pl-[15px]">
        <Icon name="greenCube" className="h-[17px] w-[17px]" />
        <svg className="mr-3.5 h-5 w-1" viewBox="0 0 4 20" aria-hidden="true">
          <path d="M1 1h2v2H1zM1 6h2v2H1zM1 11h2v2H1zM1 16h2v2H1z" fill="#b5b9ba" />
        </svg>
        <button aria-label="Expand all"><Icon name="expandAll" /></button>
        <button aria-label="Collapse all"><Icon name="collapseAll" /></button>
        <button aria-label="Tree columns" className="flex h-[30px] w-[30px] items-center justify-center border border-[#a9acae] bg-[#dadddd]">
          <Icon name="treeColumns" />
        </button>
        <Separator />
        <button aria-label="Insert here"><Icon name="insert" /></button>
        <Separator />
        <div className="flex gap-2.5">
          <button aria-label="Tree filters"><Icon name="treeFilter" /></button>
          <button aria-label="Tree settings"><Icon name="treeSettings" /></button>
        </div>
        <Separator />
        <button aria-label="More" className="mr-1 ml-auto">
          <svg className="h-3 w-3" viewBox="0 0 12 12"><path d="M1 2l4 4-4 4M6 2l4 4-4 4" fill="none" stroke="#333" strokeWidth="1.700" /></svg>
        </button>
        <button aria-label="Show options"><Icon name="page" /></button>
      </div>

      <div className="flex h-[34px] items-center pr-[14px] pl-[14px]">
        <Icon name="funnel" />
        <div className="ml-1 flex h-full flex-1 items-center border border-[#a9b3b3] bg-white pr-1.5">
          <input
            aria-label="Filter tree"
            value={query}
            onChange={(e) => setQuery(e.target.value)}
            className="min-w-0 flex-1 px-2 text-[13px] outline-none"
          />
          <button aria-label="Clear filter" onClick={() => setQuery("")}>
            <svg className="h-3 w-3" viewBox="0 0 12 12"><path d="M1 1l10 10M11 1 1 11" stroke="#a3a6a7" strokeWidth="1.700" /></svg>
          </button>
        </div>
        <button aria-label="Filter list" className="ml-[7px]"><Caret /></button>
        <button aria-label="Add filter" className="ml-3">
          <svg className="h-4 w-4" viewBox="0 0 16 16"><path d="M6 1h4v5h5v4h-5v5H6v-5H1V6h5z" fill="#a0a3a4" /></svg>
        </button>
      </div>

      <ul className="mt-1.5 text-xs">
        <li className="flex h-[22px] items-center gap-2 pl-[14px]">
          <Icon name="cube" className="h-[17px] w-[17px]" />
          MOVE_ROTATE.PRT
        </li>
        {TREE.map((node) => (
          <li key={node.label} className={clsx("flex h-[22px] items-center pl-5", node.hidden && "text-[#b9b5a5]")}>
            <span className="w-[18px]">
              {node.expandable && (
                <button aria-label={`Expand ${node.label}`} className="block">
                  <svg className="h-[11px] w-[9px]" viewBox="0 0 9 11"><path d="M0 0v11l9-5.500z" fill="#85898b" /></svg>
                </button>
              )}
            </span>
            <Icon name={node.icon} className="h-[19px] w-[19px]" />
            <span className="ml-[7px]">{node.label}</span>
          </li>
        ))}
      </ul>
      <div className="mt-1 mr-1.5 ml-[13px] flex h-2 items-center border-x-2 border-[#66bd4d]">
        <div className="h-0.5 flex-1 bg-[#7cc967]" />
      </div>
    </aside>
  );
}

function Viewport() {
  const side = useId();
  return (
    <main className="relative min-w-0 flex-1 bg-[#e8e9ed]">
      <svg className="absolute inset-0 h-full w-full" viewBox="351 206 1569 832" role="img" aria-label="MOVE_ROTATE model">
        <defs>
          <linearGradient id={side} gradientUnits="userSpaceOnUse" x1="985" y1="590" x2="1062" y2="560">
            <stop offset="0" stopColor="#6a7380" />
            <stop offset="0.4" stopColor="#6a7380" />
            <stop offset="1" stopColor="#565b66" />
          </linearGradient>
        </defs>

        {/* Base plate */}
        <path d="M934 394h563l-148 479H786z" fill="#d8c457" />
        <path d="M786 873h563l27 55H813z" fill="#877b34" />
        <path d="M1497 394l27 54-148 480-27-55z" fill="#695e27" />

        {/* Datum plane fill, behind the slot */}
        <path d="M882 483h241l39 82H922z" fill="#b39a78" fillOpacity="0.2" />

        {/* Slot */}
        <path d="M1067 461l26 55c2 6 2 8 1 14l-22 71c-8 20-29 33-50 33-15 0-23-5-27-14l-27-52z" fill={`url(#${side})`} />
        <path
          d="M988 472c8-18 30-30 49-30 21 0 33 15 29 34l-20 65c-6 23-31 38-53 38-20 0-32-14-28-32z"
          fill="#abb9ca"
        />
        <path d="M984 483h81l-9 28h-80z" fill="#94809a" fillOpacity="0.15" />

        {/* Datum plane outline and axis */}
        <path d="M881.500 483.500h241l53 109h-241z" fill="none" stroke="#6b4336" />
        <path d="M1012 504l27 54" stroke="#6b4352" strokeDasharray="4 8 16 8" />
        <path d="M1039 557l7 14" stroke="#6b4352" strokeDasharray="2 9" />

        {/* Coordinate system */}
        <g fontFamily="Liberation Sans" fontSize="17">
          <path d="M1228.500 421.500h31" stroke="#e5391f" />
          <path d="M1247 419l9 2.500-9 2.500z" fill="#e5391f" />
          <path d="M1228 421l-10-23" stroke="#37e52c" />
          <path d="M1219 402l8 10-5 2z" fill="#37e52c" />
          <path d="M1228 421l-7 28" stroke="#35e3e0" />
          <path d="M1222 442l0-10 5 1z" fill="#35e3e0" />
          <text x="1261" y="420" fill="#d9482c">X</text>
          <text x="1205" y="398" fill="#4ddc3a">Y</text>
          <text x="1206" y="463" fill="#5adcb0">Z</text>
          <text x="1229" y="436" fill="#8a6a3d">DEFAULT_CSYS</text>
        </g>

        {/* Mouse pointer */}
        <path d="M1221.500 364.500v16l3.500-3 3 6 2-1-3-6h5z" fill="#fff" stroke="#111" />
      </svg>

      <div className="absolute top-[6px] left-1/2 flex h-[38px] -translate-x-1/2 items-center border border-[#9a9fa5] bg-[#f8f9fb] px-0.5">
        {VIEW_TOOLS.map((tool) => (
          <button
            key={tool.icon}
            aria-label={tool.title}
            className={clsx("relative flex h-[30px] w-8 items-center justify-center border", tool.on ? "border-[#a9acae] bg-[#dadddf]" : "border-transparent")}>
            <Icon name={tool.icon} />
            {tool.more && (
              <svg className="absolute right-0.5 bottom-0 h-1 w-1" viewBox="0 0 4 4"><path d="M4 0v4H0z" fill="#333" /></svg>
            )}
          </button>
        ))}
      </div>
    </main>
  );
}

function StatusBar() {
  return (
    <footer className="flex h-[42px] items-center border-t border-[#a9b0b3] bg-[#f8fafa] pl-[7px] text-[#45494b]">
      <div className="flex items-center gap-2">
        <button aria-label="Toggle navigator" className="flex h-[30px] w-[26px] items-center justify-center border border-[#a9acae] bg-[#dfe2e2]">
          <Icon name="navToggle" />
        </button>
        <button aria-label="Browser"><Icon name="globe" /></button>
        <button aria-label="Full screen"><Icon name="blankBox" /></button>
      </div>
      <div className="ml-3 h-[30px] w-px bg-[#a9acae]" />
      <span className="mb-1 ml-2 h-1.5 w-1.5 rounded-full bg-[#17607f]" />
      <p className="ml-1.5 text-[13px]">Coordinate Systems will be displayed.</p>

      <div className="mr-[119px] ml-auto flex items-center">
        <div className="h-8 w-[6px] border-x border-[#a9acae]" />
        <div className="ml-0.5 flex h-[30px] border border-[#b9bcbd]">
          <button aria-label="Find" className="flex w-[33px] items-center justify-center border-r border-[#b9bcbd]"><Icon name="find" /></button>
          <button aria-label="Find list" className="flex w-4 items-center justify-center"><Caret /></button>
        </div>
        <div className="ml-0.5 h-8 w-px bg-[#a9acae]" />
      </div>
      <div className="relative mr-[21px] flex h-7 w-[218px] border border-[#a9acae]">
        <select aria-label="Selection filter" className="w-full appearance-none bg-transparent pl-2 text-sm outline-none">
          <option>Geometry</option>
        </select>
        <span className="pointer-events-none absolute inset-y-0 right-0 flex w-[19px] items-center justify-center border-l border-[#a9acae]">
          <Caret />
        </span>
      </div>
    </footer>
  );
}

export default function App() {
  return (
    <div className="flex h-screen flex-col overflow-hidden bg-[#f8f9fb] font-['Noto_Sans','Open_Sans',sans-serif]">
      <TitleBar />
      <TabBar />
      <Ribbon />
      <div className="flex min-h-0 flex-1">
        <Sidebar />
        <Viewport />
      </div>
      <StatusBar />
    </div>
  );
}
